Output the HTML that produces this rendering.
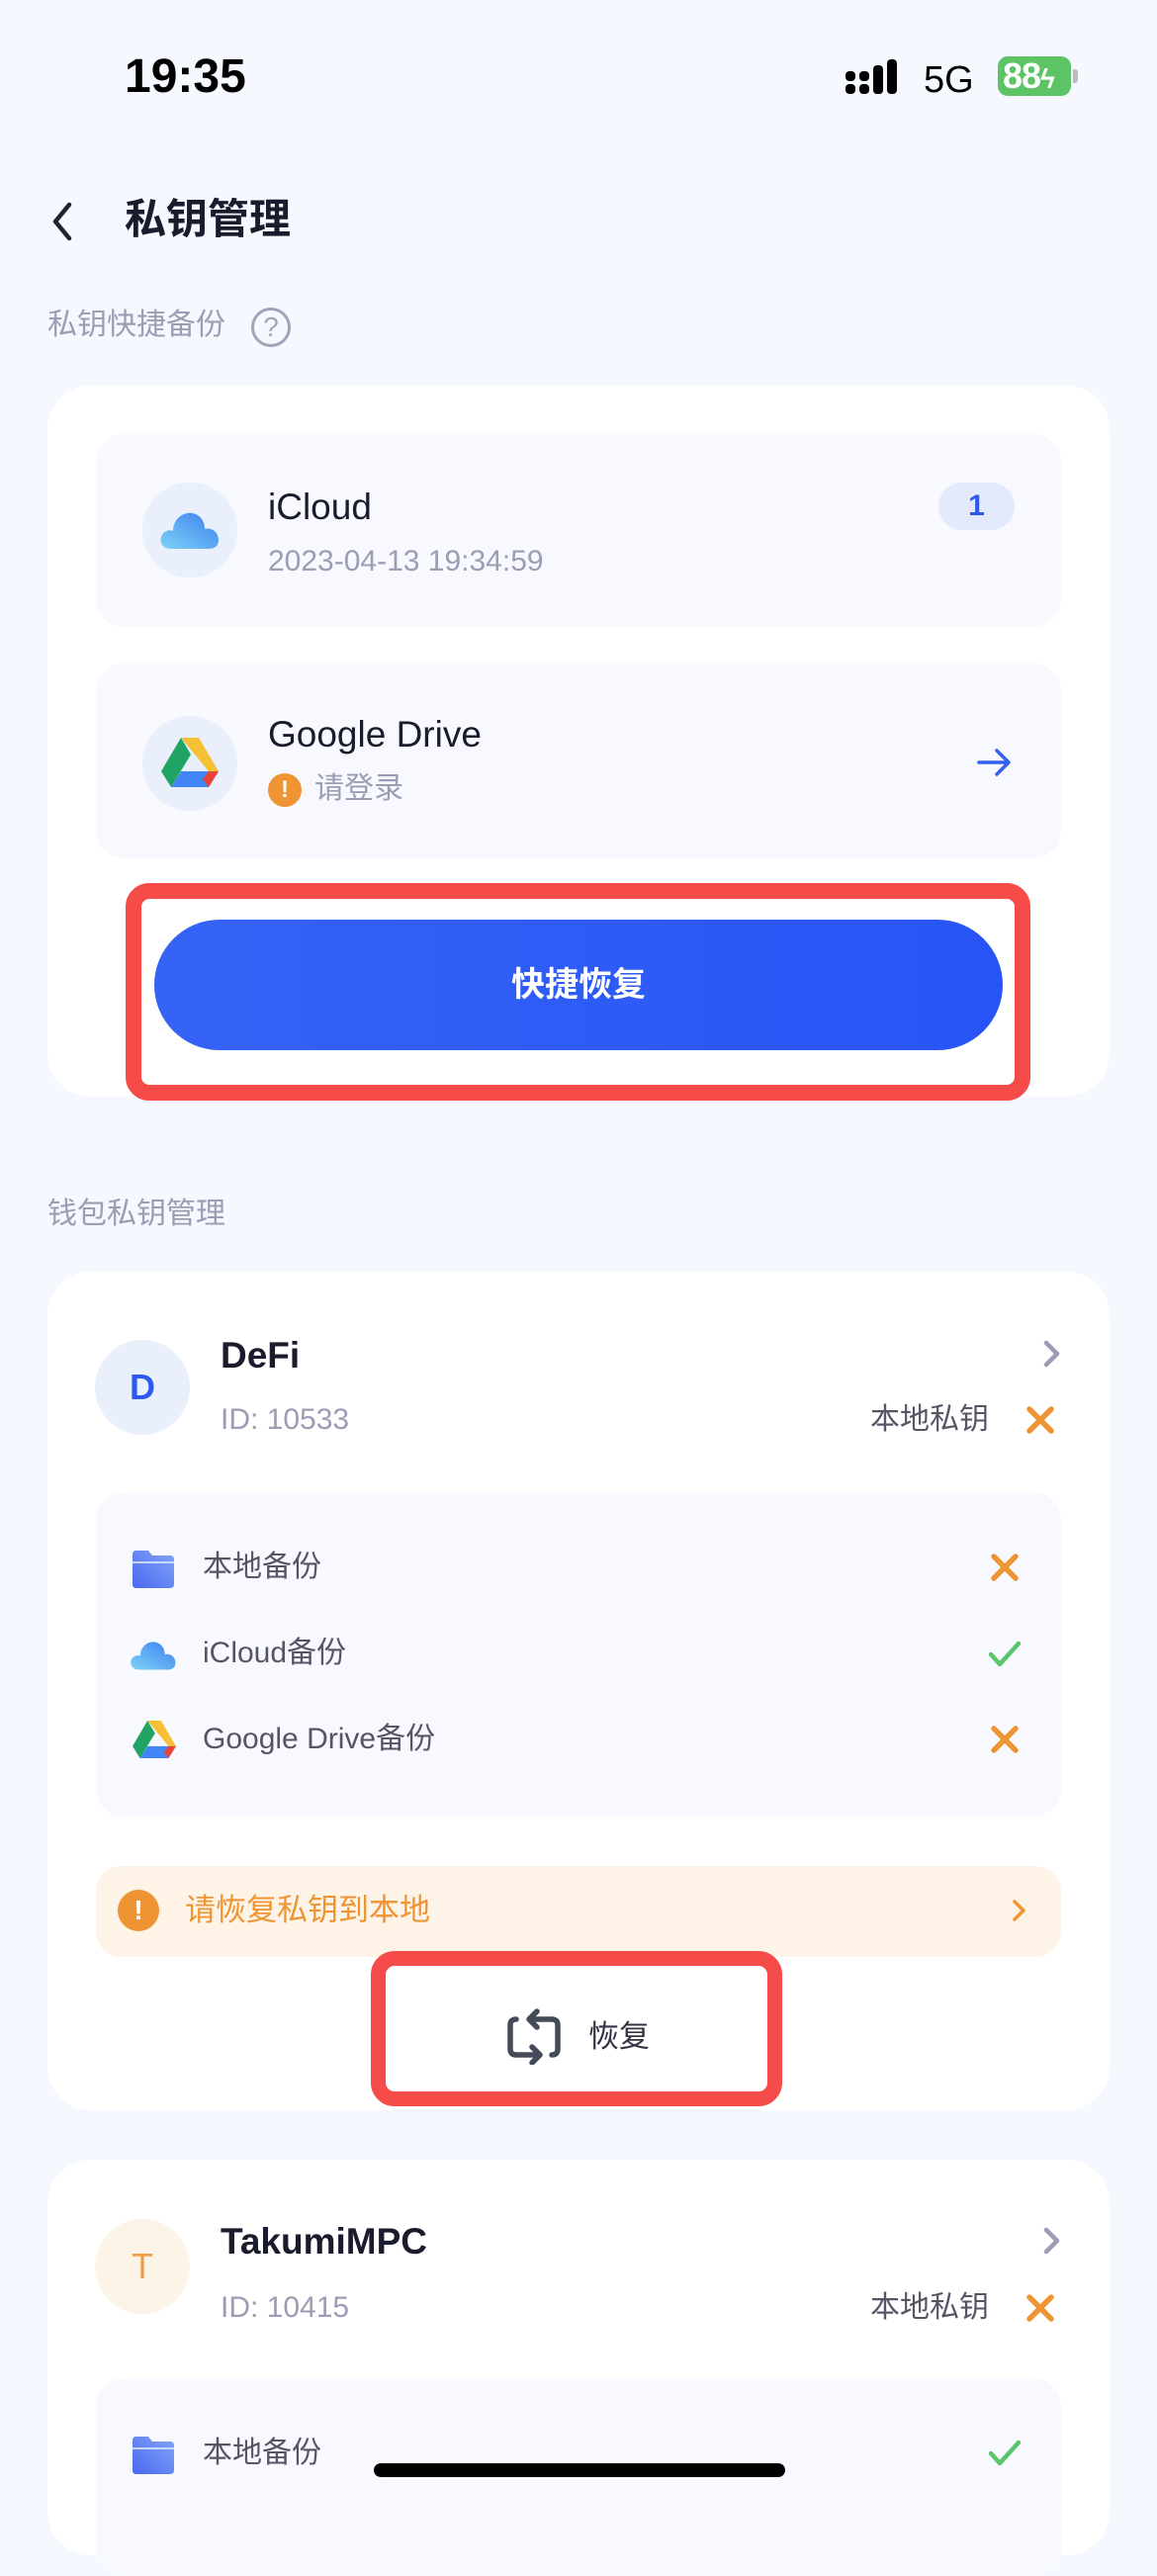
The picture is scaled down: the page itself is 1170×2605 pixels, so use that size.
<!DOCTYPE html>
<html><head><meta charset="utf-8"><style>
*{margin:0;padding:0;box-sizing:border-box}
body{width:1170px;height:2532px;background:#f5f8fe;position:relative;overflow:hidden;font-family:"Liberation Sans","Noto Sans CJK SC",sans-serif;color:#1b1b2e}
.a{position:absolute}
.card{position:absolute;left:48px;width:1074px;background:#fff;border-radius:44px}
.box{position:absolute;left:97px;width:976px;background:#f7f9fe;border-radius:28px}
.t{position:absolute;white-space:nowrap;line-height:1}
.gray{color:#9c9cb4}
.circ{position:absolute;border-radius:50%;width:96px;height:96px}
</style></head><body>
<div class="t" style="left:126px;top:54px;font-size:48px;font-weight:bold;color:#000">19:35</div>
<svg class="a" style="left:855px;top:60px" width="62" height="36" viewBox="0 0 62 36"><g fill="#000"><rect x="0" y="12" width="10" height="10" rx="4"/><rect x="0" y="25" width="10" height="10" rx="4"/><rect x="14" y="12" width="10" height="10" rx="4"/><rect x="14" y="25" width="10" height="10" rx="4"/><rect x="28" y="6" width="10" height="29" rx="4"/><rect x="28" y="25" width="10" height="10" rx="4"/><rect x="42" y="0" width="10" height="35" rx="4"/></g></svg>
<div class="t" style="left:934px;top:62px;font-size:38px;color:#000">5G</div>
<div class="a" style="left:1009px;top:57px;width:74px;height:40px;background:#5dc466;border-radius:10px;color:#fff;font-weight:bold;font-size:36px;line-height:40px;padding-left:5px;letter-spacing:-1px">88<span style="font-size:28px">ϟ</span></div>
<div class="a" style="left:1085px;top:70px;width:5px;height:14px;background:#bbb;border-radius:0 3px 3px 0"></div>

<svg class="a" style="left:48px;top:203px" width="30" height="42" viewBox="0 0 30 42"><path d="M22 4 L8 21 L22 38" fill="none" stroke="#222233" stroke-width="4.5" stroke-linecap="round" stroke-linejoin="round"/></svg>
<div class="t" style="left:126px;top:201px;font-size:42px;font-weight:bold">私钥管理</div>

<div class="t gray" style="left:48px;top:314px;font-size:30px">私钥快捷备份</div>
<div class="a" style="left:254px;top:311px;width:40px;height:40px;border:3.5px solid #a3a3b8;border-radius:50%;color:#a3a3b8;font-size:28px;text-align:center;line-height:34px">?</div>

<div class="card" style="top:390px;height:719px"></div>
<div class="box" style="top:439px;height:195px"></div>
<div class="circ" style="left:144px;top:488px;background:#e9effb"></div>
<svg class="a" style="left:161px;top:513px" width="62" height="44" viewBox="0 0 62 44"><defs><linearGradient id="cl" x1="0" y1="1" x2="1" y2="0"><stop offset="0" stop-color="#7ed3f6"/><stop offset="1" stop-color="#3d7ff0"/></linearGradient></defs><path d="M12 42 C4 42 0 36 2 30 C4 24 10 22 14 24 C14 12 24 4 34 6 C42 8 46 14 46 22 C54 20 60 26 60 33 C60 39 56 42 50 42 Z" fill="url(#cl)"/></svg>
<div class="t" style="left:271px;top:494px;font-size:37px">iCloud</div>
<div class="t gray" style="left:271px;top:553px;font-size:30px">2023-04-13 19:34:59</div>
<div class="a" style="left:949px;top:488px;width:77px;height:48px;background:#e3eafb;border-radius:24px;color:#2e59ef;font-size:30px;font-weight:bold;text-align:center;line-height:48px">1</div>

<div class="box" style="top:671px;height:197px"></div>
<div class="circ" style="left:144px;top:724px;background:#e9effb"></div>
<svg class="a" style="left:163px;top:746px" width="58" height="50" viewBox="0 0 58 50"><path d="M20 0 L38 0 L58 34 L48 34 Z" fill="#f6c034"/><path d="M20 0 L30 17 L10 50 L0 34 Z" fill="#1fa463"/><path d="M10 50 L48 50 L58 34 L20 34 Z" fill="#4285f4"/><path d="M48 50 L58 34 L48 34 L42 42Z" fill="#ea4335"/></svg>
<div class="t" style="left:271px;top:724px;font-size:37px">Google Drive</div>
<div class="a" style="left:271px;top:782px;width:34px;height:34px;border-radius:50%;background:#ef9433;color:#fff;font-weight:bold;font-size:24px;text-align:center;line-height:34px">!</div>
<div class="t gray" style="left:318px;top:783px;font-size:30px">请登录</div>
<svg class="a" style="left:988px;top:755px" width="36" height="32" viewBox="0 0 36 32"><path d="M2 16 H32 M20 4 L32 16 L20 28" fill="none" stroke="#3462ef" stroke-width="3.5" stroke-linecap="round" stroke-linejoin="round"/></svg>

<div class="a" style="left:127px;top:893px;width:915px;height:220px;border:16px solid #f54b49;border-radius:24px"></div>
<div class="a" style="left:156px;top:930px;width:858px;height:132px;border-radius:66px;background:linear-gradient(90deg,#3563f5,#2854f6);color:#fff;font-size:34px;font-weight:bold;text-align:center;line-height:132px">快捷恢复</div>

<div class="t gray" style="left:48px;top:1213px;font-size:30px">钱包私钥管理</div>

<div class="card" style="top:1286px;height:848px"></div>
<div class="circ" style="left:96px;top:1355px;background:#e9effb;color:#2e59ef;font-size:36px;font-weight:bold;text-align:center;line-height:96px">D</div>
<div class="t" style="left:223px;top:1352px;font-size:37px;font-weight:bold">DeFi</div>
<div class="t gray" style="left:223px;top:1421px;font-size:30px">ID: 10533</div>
<svg class="a" style="left:1054px;top:1354px" width="20" height="30" viewBox="0 0 20 30"><path d="M4 4 L15 15 L4 26" fill="none" stroke="#9c9cb4" stroke-width="4.5" stroke-linecap="round" stroke-linejoin="round"/></svg>
<div class="t" style="left:880px;top:1421px;font-size:30px;color:#555566">本地私钥</div>
<svg class="a" style="left:1036px;top:1420px" width="32" height="32" viewBox="0 0 32 32"><path d="M5 5 L27 27 M27 5 L5 27" stroke="#ef9433" stroke-width="5.5" stroke-linecap="round"/></svg>

<div class="box" style="top:1509px;height:328px"></div>
<svg class="a" style="left:134px;top:1568px" width="42" height="38" viewBox="0 0 42 38"><defs><linearGradient id="fd" x1="0" y1="1" x2="1" y2="0"><stop offset="0" stop-color="#4768ef"/><stop offset="1" stop-color="#86a6f7"/></linearGradient></defs><path d="M0 4 Q0 0 4 0 H16 L20 5 H38 Q42 5 42 9 V34 Q42 38 38 38 H4 Q0 38 0 34Z" fill="url(#fd)"/><rect x="0" y="11" width="42" height="2" fill="#c9d6fb"/></svg>
<div class="t" style="left:205px;top:1570px;font-size:30px;color:#555566">本地备份</div>
<svg class="a" style="left:1000px;top:1569px" width="32" height="32" viewBox="0 0 32 32"><path d="M5 5 L27 27 M27 5 L5 27" stroke="#ef9433" stroke-width="5.5" stroke-linecap="round"/></svg>
<svg class="a" style="left:131px;top:1656px" width="48" height="34" viewBox="0 0 62 44"><path d="M12 42 C4 42 0 36 2 30 C4 24 10 22 14 24 C14 12 24 4 34 6 C42 8 46 14 46 22 C54 20 60 26 60 33 C60 39 56 42 50 42 Z" fill="url(#cl)"/></svg>
<div class="t" style="left:205px;top:1657px;font-size:30px;color:#555566">iCloud备份</div>
<svg class="a" style="left:998px;top:1658px" width="36" height="30" viewBox="0 0 36 30"><path d="M4 15 L13 25 L32 4" fill="none" stroke="#5ac66c" stroke-width="4.5" stroke-linecap="round" stroke-linejoin="round"/></svg>
<svg class="a" style="left:134px;top:1740px" width="44" height="38" viewBox="0 0 58 50"><path d="M20 0 L38 0 L58 34 L48 34 Z" fill="#f6c034"/><path d="M20 0 L30 17 L10 50 L0 34 Z" fill="#1fa463"/><path d="M10 50 L48 50 L58 34 L20 34 Z" fill="#4285f4"/><path d="M48 50 L58 34 L48 34 L42 42Z" fill="#ea4335"/></svg>
<div class="t" style="left:205px;top:1744px;font-size:30px;color:#555566">Google Drive备份</div>
<svg class="a" style="left:1000px;top:1743px" width="32" height="32" viewBox="0 0 32 32"><path d="M5 5 L27 27 M27 5 L5 27" stroke="#ef9433" stroke-width="5.5" stroke-linecap="round"/></svg>

<div class="a" style="left:97px;top:1887px;width:976px;height:92px;background:#fdf3e6;border-radius:26px"></div>
<div class="a" style="left:119px;top:1911px;width:42px;height:42px;border-radius:50%;background:#ef9433;color:#fff;font-weight:bold;font-size:28px;text-align:center;line-height:42px">!</div>
<div class="t" style="left:187px;top:1916px;font-size:31px;color:#ef9433">请恢复私钥到本地</div>
<svg class="a" style="left:1022px;top:1919px" width="18" height="26" viewBox="0 0 18 26"><path d="M4 4 L13 13 L4 22" fill="none" stroke="#ef9433" stroke-width="3.5" stroke-linecap="round" stroke-linejoin="round"/></svg>

<div class="a" style="left:375px;top:1973px;width:416px;height:157px;border:15px solid #f54b49;border-radius:24px;background:#fff"></div>
<svg class="a" style="left:512px;top:2030px" width="56" height="58" viewBox="0 0 56 58"><g fill="none" stroke="#444a58" stroke-width="5.5" stroke-linecap="round" stroke-linejoin="round"><path d="M10 12 Q4 12 4 18 V42 Q4 48 10 48 H30"/><path d="M46 48 Q52 48 52 42 V18 Q52 12 46 12 H26"/><path d="M31 4 L23 12 L31 20"/><path d="M26 40 L34 48 L26 56"/></g></svg>
<div class="t" style="left:595px;top:2044px;font-size:31px;color:#333344">恢复</div>

<div class="card" style="top:2184px;height:400px"></div>
<div class="circ" style="left:96px;top:2244px;background:#fdf4e8;color:#ef9e45;font-size:36px;text-align:center;line-height:96px">T</div>
<div class="t" style="left:223px;top:2248px;font-size:37px;font-weight:bold">TakumiMPC</div>
<div class="t gray" style="left:223px;top:2319px;font-size:30px">ID: 10415</div>
<svg class="a" style="left:1054px;top:2251px" width="20" height="30" viewBox="0 0 20 30"><path d="M4 4 L15 15 L4 26" fill="none" stroke="#9c9cb4" stroke-width="4.5" stroke-linecap="round" stroke-linejoin="round"/></svg>
<div class="t" style="left:880px;top:2319px;font-size:30px;color:#555566">本地私钥</div>
<svg class="a" style="left:1036px;top:2318px" width="32" height="32" viewBox="0 0 32 32"><path d="M5 5 L27 27 M27 5 L5 27" stroke="#ef9433" stroke-width="5.5" stroke-linecap="round"/></svg>
<div class="box" style="top:2405px;height:200px"></div>
<svg class="a" style="left:134px;top:2464px" width="42" height="38" viewBox="0 0 42 38"><path d="M0 4 Q0 0 4 0 H16 L20 5 H38 Q42 5 42 9 V34 Q42 38 38 38 H4 Q0 38 0 34Z" fill="url(#fd)"/><rect x="0" y="11" width="42" height="2" fill="#c9d6fb"/></svg>
<div class="t" style="left:205px;top:2466px;font-size:30px;color:#555566">本地备份</div>
<svg class="a" style="left:998px;top:2466px" width="36" height="30" viewBox="0 0 36 30"><path d="M4 15 L13 25 L32 4" fill="none" stroke="#5ac66c" stroke-width="4.5" stroke-linecap="round" stroke-linejoin="round"/></svg>
<div class="a" style="left:378px;top:2491px;width:416px;height:14px;background:#000;border-radius:7px"></div>
</body></html>
